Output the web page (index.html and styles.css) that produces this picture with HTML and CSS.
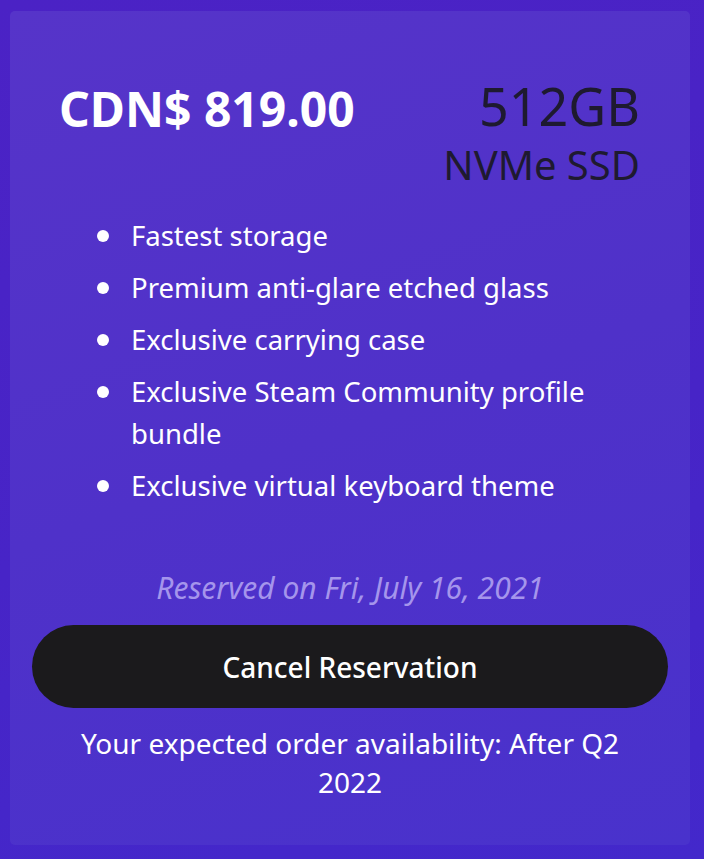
FILE: index.html
```html
<!DOCTYPE html>
<html>
<head>
<meta charset="utf-8">
<link rel="stylesheet" href="styles.css">
</head>
<body>
<div class="card">
  <div class="head">
    <div class="price">CDN$ 819.00</div>
    <div class="spec">
      <div class="size">512GB</div>
      <div class="type">NVMe SSD</div>
    </div>
  </div>
  <ul class="features">
    <li>Fastest storage</li>
    <li>Premium anti-glare etched glass</li>
    <li>Exclusive carrying case</li>
    <li>Exclusive Steam Community profile bundle</li>
    <li>Exclusive virtual keyboard theme</li>
  </ul>
  <div class="reserved">Reserved on Fri, July 16, 2021</div>
  <button class="cancel">Cancel Reservation</button>
  <div class="avail">Your expected order availability: After Q2 2022</div>
</div>
</body>
</html>
```

FILE: styles.css
```css
html, body {
  margin: 0;
  padding: 0;
}
body {
  background: linear-gradient(165deg, #4b22c5 0%, #4724c7 55%, #4328cb 100%);
  font-family: "Noto Sans", "Open Sans", sans-serif;
  width: 704px;
  height: 859px;
  padding: 11px 14px 14px 10px;
  box-sizing: border-box;
}
.card {
  height: 834px;
  box-sizing: border-box;
  background: linear-gradient(160deg, #5634c9 0%, #4f31c9 50%, #4932cc 100%);
  border-radius: 5px;
  padding: 70px 0 0 0;
  display: flex;
  flex-direction: column;
}
.head {
  display: flex;
  justify-content: space-between;
  align-items: flex-start;
  padding: 0 50px 0 49px;
}
.price {
  color: #fff;
  font-weight: 700;
  font-size: 48px;
  line-height: 56px;
}
.spec {
  text-align: right;
  color: #1e1a30;
}
.size {
  font-size: 52px;
  line-height: 50px;
}
.type {
  font-size: 40px;
  line-height: 56px;
  margin-top: 6px;
}
.features {
  list-style: none;
  margin: 22px 0 0 0;
  padding: 0 60px 0 121px;
  color: #fff;
  font-size: 27.5px;
  line-height: 42px;
}
.features li {
  position: relative;
  margin-bottom: 10px;
}
.features li::before {
  content: "";
  position: absolute;
  left: -34px;
  top: 15px;
  width: 12px;
  height: 12px;
  border-radius: 50%;
  background: #fff;
}
.reserved {
  text-align: center;
  font-style: italic;
  color: #a595ec;
  font-size: 30px;
  line-height: 40px;
  margin-top: 51px;
}
.cancel {
  margin: 17px 22px 0 22px;
  height: 83px;
  border: none;
  border-radius: 42px;
  background: #1b1a1c;
  color: #fff;
  font-family: inherit;
  font-size: 28px;
  font-weight: 500;
}
.avail {
  text-align: center;
  color: #fff;
  font-size: 28px;
  line-height: 39px;
  margin-top: 16px;
  padding: 0 60px;
}
```
